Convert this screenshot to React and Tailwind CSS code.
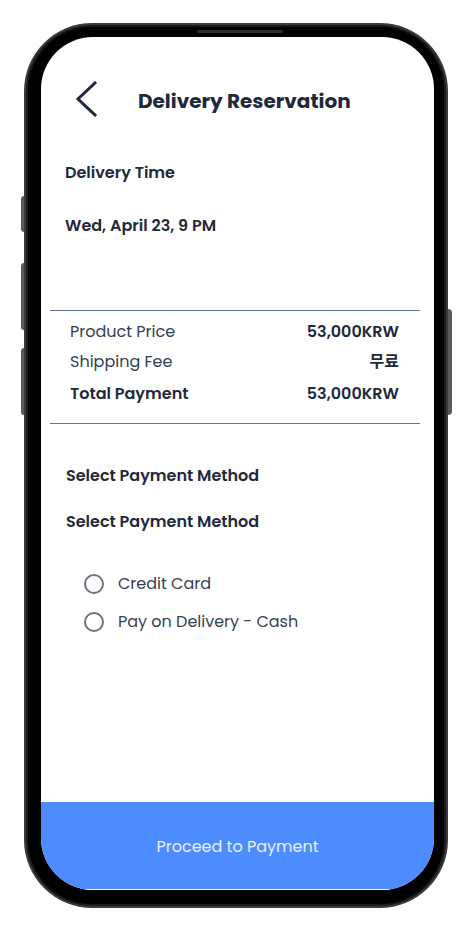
import React from "react";

const font = { fontFamily: "Poppins, Inter, 'Noto Sans', 'Noto Sans CJK KR', sans-serif" };

function Row({ label, value, bold }) {
  return (
    <div className="flex items-center justify-between h-[24px]">
      <span className={bold ? "font-semibold text-[#1e293b]" : "text-[#334155]"}>{label}</span>
      <span className="font-semibold text-[#1e293b]">{value}</span>
    </div>
  );
}

function Radio({ label }) {
  return (
    <div className="flex items-center h-[24px]">
      <span className="w-[20px] h-[20px] rounded-full border-2 border-[#6b7280] box-border" />
      <span className="ml-[14px] text-[16px] text-[#374151]">{label}</span>
    </div>
  );
}

export default function App() {
  return (
    <div className="w-[473px] h-[932px] bg-white pt-[23px] pl-[24px]" style={font}>
      <div className="relative w-[424px] h-[885px]">
        {/* side buttons */}
        <div className="absolute left-[-3px] top-[173px] w-[3px] h-[36px] rounded-l-sm bg-[#5a5a5a]" />
        <div className="absolute left-[-3px] top-[240px] w-[3px] h-[67px] rounded-l-sm bg-[#5a5a5a]" />
        <div className="absolute left-[-3px] top-[325px] w-[3px] h-[67px] rounded-l-sm bg-[#5a5a5a]" />
        <div className="absolute right-[-4px] top-[286px] w-[4px] h-[106px] rounded-r-sm bg-[#5a5a5a]" />
        <div className="w-full h-full rounded-[68px] bg-[#3c3c3c] p-[2px]">
          <div className="w-full h-full rounded-[66px] bg-[#1a1a1a] p-[2px]">
            <div className="relative w-full h-full rounded-[64px] bg-black pt-[10px] pl-[13px] pr-[10px] pb-[14px]">
              <div className="absolute left-[169px] top-[3px] w-[86px] h-[3px] rounded-full bg-[#2b2b2b]" />
              <div className="w-[393px] h-[853px] rounded-[52px] bg-white overflow-hidden flex flex-col">
                {/* header */}
                <div className="flex items-center pt-[44px] pl-[34px]">
                  <svg width="22" height="36" viewBox="0 0 22 36" fill="none">
                    <path d="M20 2 L3 18 L20 34" stroke="#1e293b" strokeWidth="3" strokeLinecap="square" strokeLinejoin="miter" />
                  </svg>
                  <h1 className="ml-[41px] mt-[4px] text-[20px] font-bold text-[#1e293b] leading-[24px]">
                    Delivery Reservation
                  </h1>
                </div>

                <div className="pl-[24px] mt-[44px]">
                  <p className="text-[16px] font-semibold text-[#1e293b] leading-[24px]">Delivery Time</p>
                  <p className="mt-[29px] text-[16px] font-semibold text-[#1e293b] leading-[24px]">Wed, April 23, 9 PM</p>
                </div>

                <div className="ml-[9px] mr-[14px] mt-[72px] border-t border-b border-[#64748b] pt-[9px] pb-[17px] pl-[20px] pr-[21px] text-[16px] flex flex-col gap-[6px]">
                  <Row label="Product Price" value="53,000KRW" />
                  <Row label="Shipping Fee" value="무료" />
                  <div className="mt-[2px]">
                    <Row label="Total Payment" value="53,000KRW" bold />
                  </div>
                </div>

                <div className="pl-[25px] mt-[40px]">
                  <p className="text-[16px] font-semibold text-[#1e293b] leading-[24px]">Select Payment Method</p>
                  <p className="mt-[22px] text-[16px] font-semibold text-[#1e293b] leading-[24px]">Select Payment Method</p>
                </div>

                <div className="pl-[43px] mt-[38px] flex flex-col gap-[14px]">
                  <Radio label="Credit Card" />
                  <Radio label="Pay on Delivery - Cash" />
                </div>

                <div className="flex-1" />
                <div className="h-[87px] bg-[#4d8cff] flex items-center justify-center pt-[2px]">
                  <span className="text-[16px] text-[#eaf1ff]">Proceed to Payment</span>
                </div>
                <div className="h-[1px] bg-white" />
              </div>
            </div>
          </div>
        </div>
      </div>
    </div>
  );
}
